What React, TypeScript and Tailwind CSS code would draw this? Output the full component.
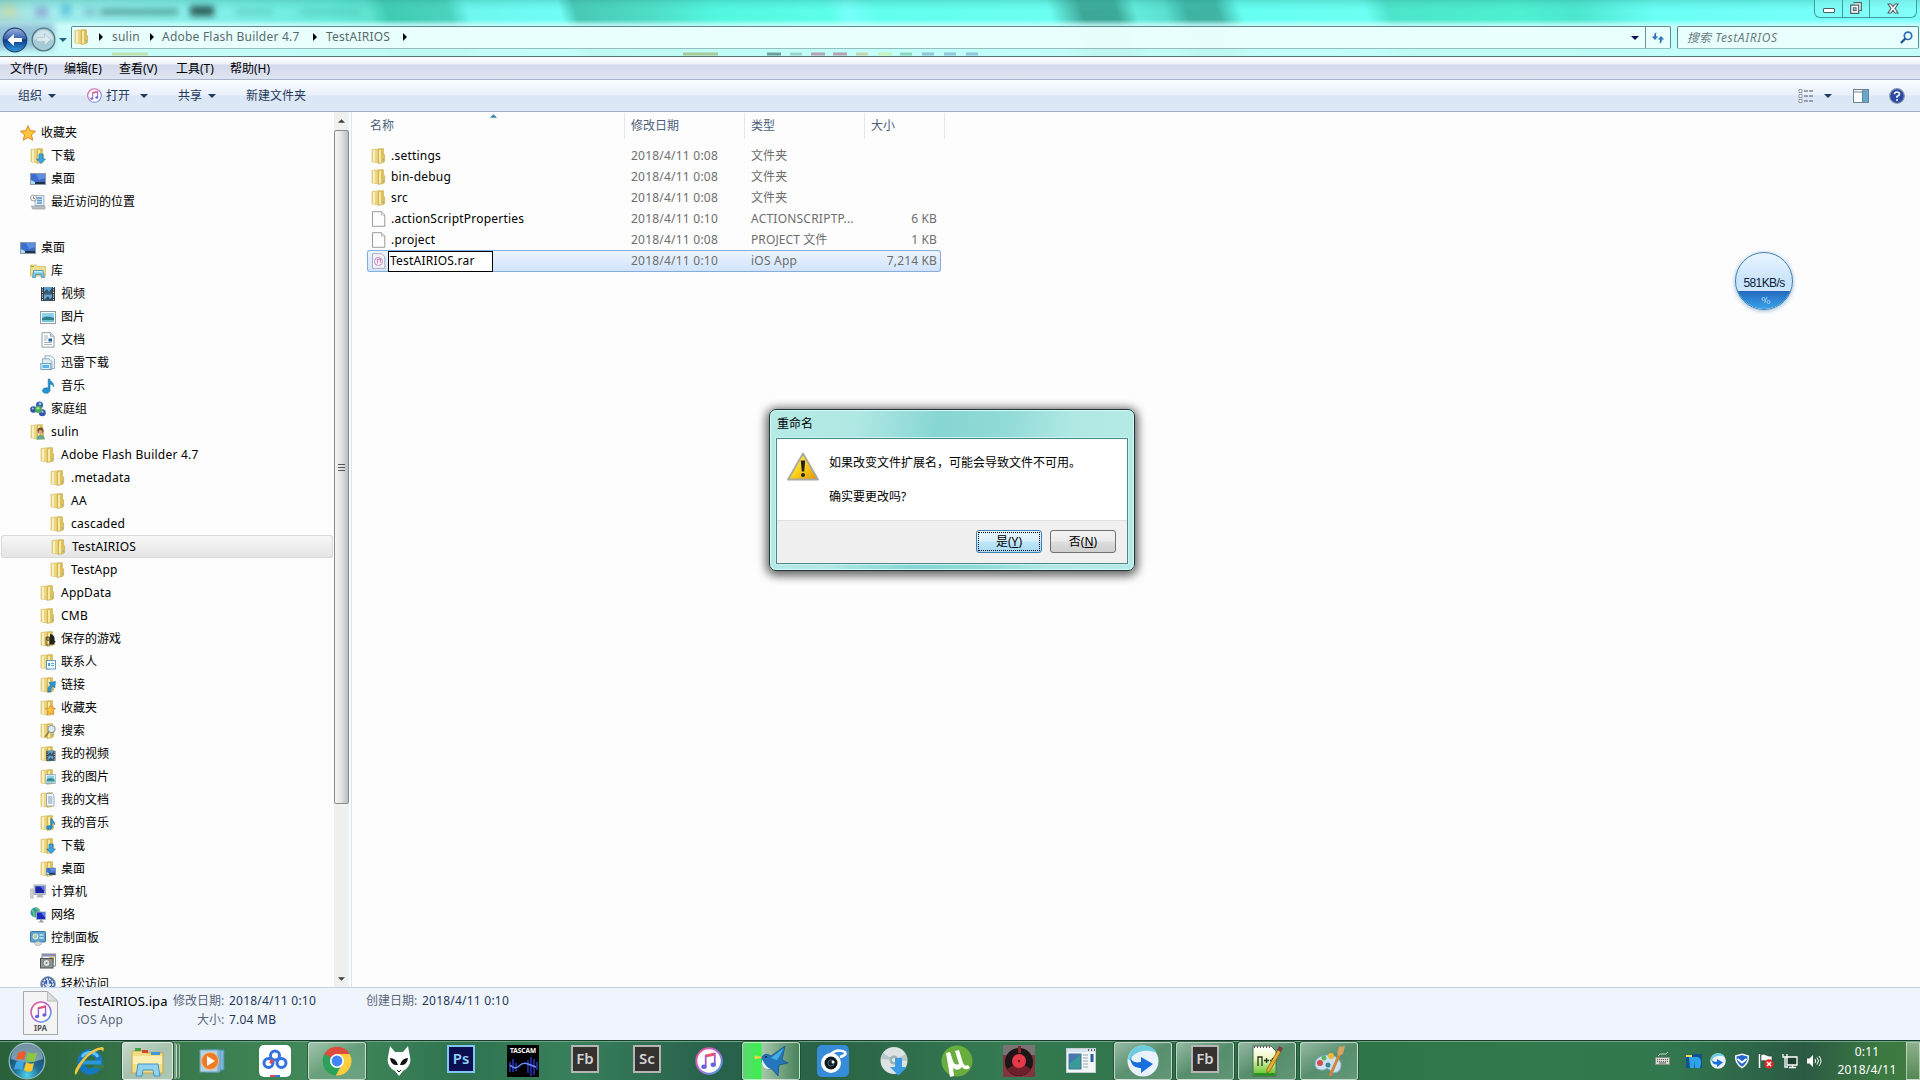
import type { ReactNode } from "react"

type Kind =
  | "star" | "folder" | "desktop" | "recent" | "library" | "video" | "picture" | "doc" | "thunder" | "music"
  | "homegroup" | "user" | "games" | "contacts" | "links" | "favs" | "search" | "fvideo" | "fpicture" | "fdoc"
  | "fmusic" | "download" | "fdesktop" | "computer" | "network" | "control" | "programs" | "ease" | "file" | "ipa"

function FolderBase() {
  return (
    <>
      <path d="M1 1.5 L8 .8 V14.8 L1 14z" fill="#ecd684" stroke="#d4ba60" strokeWidth=".6" />
      <path d="M2 2 H4 V14 H2z" fill="#f8efc0" />
      <path d="M7.2 2.2 L8.4 .7 H12.4 V5.6 L13.6 7 V13.6 L12 14.6 L7.2 15.4z" fill="#dfc15b" stroke="#c4a344" strokeWidth=".6" />
      <path d="M8 2.4 L10 1.4 V14.2 L8 14.8z" fill="#f7e9a6" />
      <path d="M12.5 11v2" stroke="#6fb4c9" strokeWidth=".8" />
    </>
  )
}

function Monitor() {
  return (
    <>
      <rect x=".5" y="2.5" width="15" height="11" fill="#3c69b8" stroke="#8e9aa8" />
      <path d="M1 3h14v5L1 11z" fill="#3d6fd0" />
      <path d="M6 3h9v4L9 9z" fill="#6b9bea" opacity=".7" />
      <rect x="1" y="11" width="14" height="2" fill="#20314c" />
      <path d="M1 13V9l4 2v2z" fill="#a9dcf1" />
    </>
  )
}

const FILM = (
  <>
    <rect x="1" y="1" width="14" height="14" fill="#2b3239" />
    <rect x="4" y="1" width="8" height="6.5" fill="#5b9fd0" />
    <rect x="4" y="8.5" width="8" height="6.5" fill="#69abd7" />
    <path d="M4 6l3-3 2 3 3-4v5H4zM4 14l4-4 2 3 2-2v4H4z" fill="#34546e" />
    <path d="M2.5 1v14M13.5 1v14" stroke="#e6ebee" strokeWidth="1.2" strokeDasharray="1.2 1.2" />
  </>
)

const PICTURE = (
  <>
    <rect x=".5" y="2.5" width="15" height="12" fill="#fff" stroke="#8f9ca8" />
    <rect x="2" y="4" width="12" height="9" fill="#8ed0ec" />
    <path d="M2 9q5-3 12 0v4H2z" fill="#2b8389" />
    <path d="M2 11h12v2H2z" fill="#6fc3cf" />
  </>
)

const STAR = (
  <path d="M8 .7l2.2 5 5.3.5-4 3.6 1.2 5.4L8 12.4l-4.7 2.8 1.2-5.4-4-3.6 5.3-.5z" fill="#ffc53d" stroke="#d97a1d" strokeWidth=".9" />
)

const NOTE = (
  <path d="M8.2 1h1.5c.2 2.600 4.800 3.500 3.800 8-.6-2.200-2-3-3.500-3v6.200c0 4-7.500 4-7.500.6 0-2.700 3.500-3.600 5.700-2.500z" fill="#2593d3" stroke="#156fa8" strokeWidth=".6" />
)

const DOWN = <path d="M9 6h4v5h2.500L11 15.600 6.500 11H9z" fill="#35a5e4" stroke="#1a6ea8" strokeWidth=".6" />

const drawings: Record<Kind, ReactNode> = {
  star: STAR,
  folder: <FolderBase />,
  desktop: <Monitor />,
  recent: (
    <>
      <path d="M5 1.500h9v10H5z" fill="#e3edf3" stroke="#94a3ad" strokeWidth=".8" />
      <path d="M7 4h5M7 6.500h5M7 9h5" stroke="#4f96c8" strokeWidth="1.300" />
      <path d="M1.500 12h13.500v3H2.500z" fill="#b9bfc4" stroke="#90979d" strokeWidth=".6" />
      <circle cx="3.500" cy="4" r="3" fill="#f3f4f5" stroke="#83898d" strokeWidth=".8" />
      <path d="M3.500 2.500v2h1.500" stroke="#555" strokeWidth=".7" fill="none" />
    </>
  ),
  library: (
    <>
      <path d="M.5 2h6l1 1.500h8v9.500H.5z" fill="#f0dd8c" stroke="#cdb55c" strokeWidth=".7" />
      <path d="M1 3h3v1H1z" fill="#74b943" />
      <path d="M2.500 14.500l1-7h9.500l1.500 7h-3.200v-3H5.700v3z" fill="#79c3e1" stroke="#378bb0" strokeWidth=".7" />
      <path d="M4 8h8.500v1.500H3.800z" fill="#c8eefa" />
    </>
  ),
  video: FILM,
  picture: PICTURE,
  doc: (
    <>
      <path d="M2 .7h8.500L14 4.200v11H2z" fill="#fbfcfd" stroke="#8594a3" strokeWidth=".9" />
      <path d="M10.500.7v3.500H14" fill="#dce4ea" stroke="#8594a3" strokeWidth=".8" />
      <path d="M4 4h4M4 6h4M4 8h3M4 10.500h8M4 12.500h8" stroke="#97a4b0" strokeWidth=".8" />
      <rect x="8.500" y="6.500" width="3.500" height="3" fill="#1f5fa0" />
    </>
  ),
  thunder: (
    <>
      <path d="M5 .8h6L14.500 4v9.500H5z" fill="#edf6fb" stroke="#7d9db4" strokeWidth=".8" />
      <path d="M2.500 3.800h6.500L12 6.500v8H2.500z" fill="#dcecf6" stroke="#7d9db4" strokeWidth=".8" />
      <rect x=".8" y="8.500" width="10" height="6" fill="#d8effb" stroke="#6296b8" strokeWidth=".8" />
      <rect x="2.500" y="10" width="6.500" height="3" fill="#58b4e6" />
    </>
  ),
  music: NOTE,
  homegroup: (
    <>
      <circle cx="9.500" cy="4" r="3.600" fill="#3966b0" />
      <circle cx="3.500" cy="8.500" r="3.300" fill="#2f54a8" />
      <circle cx="12.300" cy="11.800" r="3.500" fill="#3456b5" />
      <circle cx="8.500" cy="8.500" r="3.600" fill="#4cae4f" />
      <circle cx="8" cy="7.300" r="1.400" fill="#a4e2a0" />
      <circle cx="10" cy="2.800" r="1.200" fill="#a7c8ef" />
      <circle cx="2.900" cy="7.400" r="1" fill="#a7c8ef" />
      <circle cx="12.500" cy="10.800" r="1.100" fill="#a7c8ef" />
    </>
  ),
  user: (
    <>
      <FolderBase />
      <circle cx="10.500" cy="6.500" r="3" fill="#7a4a33" />
      <circle cx="10.500" cy="8" r="2" fill="#d9a583" />
      <path d="M6.500 15.500q0-4.500 4-4.500t4.500 4.500z" fill="#67a98a" />
    </>
  ),
  games: (
    <>
      <FolderBase />
      <path d="M10 3q4.500.5 4.500 4.500v2l1.300 1.500-1.300.5v2H10z" fill="#25221d" />
      <path d="M6 6h3.500v8H6z" fill="none" stroke="#6a5a2c" />
      <circle cx="8" cy="8" r="1.400" fill="none" stroke="#514520" />
    </>
  ),
  contacts: (
    <>
      <FolderBase />
      <rect x="6.500" y="6.500" width="9" height="8.500" fill="#f1f8fc" stroke="#5c9dc0" />
      <path d="M8 9h2v3H8z" fill="#4aa0d4" />
      <path d="M11 9.500h3M11 11.500h3" stroke="#76a9c6" />
    </>
  ),
  links: (
    <>
      <FolderBase />
      <path d="M8 15q-1-5 2.500-7L9 5.500l6.500-1-.7 6.500-1.800-1.800q-3 2-2 5.800z" fill="#2c96d3" stroke="#1569a0" strokeWidth=".5" />
    </>
  ),
  favs: (
    <>
      <FolderBase />
      <g transform="translate(5.200 4.500) scale(.67)">{STAR}</g>
    </>
  ),
  search: (
    <>
      <FolderBase />
      <circle cx="11.500" cy="6" r="3.500" fill="#dcecf4" stroke="#8f9da6" strokeWidth="1.200" />
      <path d="M9 8.700L5 14" stroke="#9b8651" strokeWidth="1.800" />
    </>
  ),
  fvideo: (
    <>
      <FolderBase />
      <g transform="translate(5.500 4) scale(.66 .72)">{FILM}</g>
    </>
  ),
  fpicture: (
    <>
      <FolderBase />
      <g transform="translate(5.500 3.500) scale(.64 .75)">{PICTURE}</g>
    </>
  ),
  fdoc: (
    <>
      <FolderBase />
      <path d="M6.500 1.500h6L14 3v11H6.500z" fill="#f5f9fb" stroke="#8f9fad" strokeWidth=".8" />
      <path d="M8 5h4.500M8 7h4.500M8 9h4.500M8 11h4.500" stroke="#7d9cb9" />
    </>
  ),
  fmusic: (
    <>
      <FolderBase />
      <g transform="translate(4.500 3) scale(.76)">{NOTE}</g>
    </>
  ),
  download: (
    <>
      <FolderBase />
      {DOWN}
    </>
  ),
  fdesktop: (
    <>
      <FolderBase />
      <g transform="translate(6 5.500) scale(.62)">
        <Monitor />
      </g>
    </>
  ),
  computer: (
    <>
      <path d="M.7 5h2.300v9H.7z" fill="#d7e0d8" stroke="#8c9690" strokeWidth=".6" />
      <rect x="4" y="1" width="11.500" height="9.500" fill="#c9ced8" stroke="#8c94a4" strokeWidth=".7" />
      <rect x="5.300" y="2.300" width="9" height="6.800" fill="#1a22a8" />
      <path d="M10 2.300h4.300v5z" fill="#5a78e0" />
      <path d="M8 10.500h4l1.500 3h-7z" fill="#aeb5bd" />
    </>
  ),
  network: (
    <>
      <circle cx="5.500" cy="5.500" r="5" fill="#2f93b8" />
      <path d="M2 3q3 3 2 7M5 1q5 1 4 5" stroke="#6ac36a" strokeWidth="2" fill="none" />
      <rect x="6.500" y="5" width="9" height="7.500" fill="#1b2bc0" stroke="#a7b3c6" strokeWidth=".9" />
      <path d="M11 5.500h4v5z" fill="#5d84ea" />
      <path d="M10 12.500h2.500v2H14v1H8.500v-1H10z" fill="#99a2ac" />
    </>
  ),
  control: (
    <>
      <rect x=".5" y="1.500" width="15" height="10.500" rx="1" fill="#5ea5d0" stroke="#38749f" />
      <circle cx="5.500" cy="6.500" r="2.500" fill="#a4d19a" stroke="#fff" strokeWidth=".8" />
      <path d="M9.500 5h4M9.500 8h4" stroke="#fff" strokeWidth="1.200" />
      <ellipse cx="8" cy="13.500" rx="3.500" ry="2" fill="#d3dbe0" stroke="#9aa8b1" strokeWidth=".6" />
    </>
  ),
  programs: (
    <>
      <rect x="2" y="1" width="13.500" height="12" fill="#edf0f1" stroke="#878c93" />
      <path d="M2 1h13.500v2.500H2z" fill="#8a8eb4" />
      <path d="M9 4h5v6z" fill="#e8b93d" />
      <rect x=".5" y="5.500" width="12.500" height="9.500" fill="#8e9692" stroke="#4d5352" />
      <circle cx="6.500" cy="10" r="3.500" fill="#dfe4e2" stroke="#747b78" />
      <circle cx="6.500" cy="10" r="1" fill="#747b78" />
    </>
  ),
  ease: (
    <>
      <circle cx="8" cy="8" r="7.300" fill="#3c66b0" stroke="#8793a8" />
      <circle cx="8" cy="8" r="5" fill="none" stroke="#fff" strokeWidth="1.400" strokeDasharray="2 1" />
      <path d="M8 4v4.500h3M5 8l3 3 3-3" stroke="#fff" strokeWidth="1.400" fill="none" />
    </>
  ),
  file: (
    <>
      <path d="M1.500.7h9L13.800 4v11.300H1.500z" fill="#fdfdfd" stroke="#909090" strokeWidth=".9" />
      <path d="M10.500.7V4h3.300" fill="#e6e6e6" stroke="#a0a0a0" strokeWidth=".7" />
    </>
  ),
  ipa: (
    <>
      <path d="M1.500.7h9L13.800 4v11.300H1.500z" fill="#f4f4f8" stroke="#a5a5b0" strokeWidth=".9" />
      <circle cx="7.500" cy="8.500" r="4" fill="#fff" stroke="#a78bcf" />
      <path d="M6.300 10.500V6.500l3-.6v4" stroke="#d65394" strokeWidth=".9" fill="none" />
    </>
  ),
}

function Icon({ kind }: { kind: Kind }) {
  return (
    <svg viewBox="0 0 16 16" className="size-4 shrink-0">
      {drawings[kind]}
    </svg>
  )
}

const pads = ["pl-5", "pl-[30px]", "pl-10", "pl-[50px]"]

const isLatin = (s: string) => /^[\x20-\x7e]+$/.test(s)

const tree: [number, Kind, string][] = [
  [0, "star", "收藏夹"],
  [1, "download", "下载"],
  [1, "desktop", "桌面"],
  [1, "recent", "最近访问的位置"],
  [0, "folder", ""],
  [0, "desktop", "桌面"],
  [1, "library", "库"],
  [2, "video", "视频"],
  [2, "picture", "图片"],
  [2, "doc", "文档"],
  [2, "thunder", "迅雷下载"],
  [2, "music", "音乐"],
  [1, "homegroup", "家庭组"],
  [1, "user", "sulin"],
  [2, "folder", "Adobe Flash Builder 4.7"],
  [3, "folder", ".metadata"],
  [3, "folder", "AA"],
  [3, "folder", "cascaded"],
  [3, "folder", "TestAIRIOS"],
  [3, "folder", "TestApp"],
  [2, "folder", "AppData"],
  [2, "folder", "CMB"],
  [2, "games", "保存的游戏"],
  [2, "contacts", "联系人"],
  [2, "links", "链接"],
  [2, "favs", "收藏夹"],
  [2, "search", "搜索"],
  [2, "fvideo", "我的视频"],
  [2, "fpicture", "我的图片"],
  [2, "fdoc", "我的文档"],
  [2, "fmusic", "我的音乐"],
  [2, "download", "下载"],
  [2, "fdesktop", "桌面"],
  [1, "computer", "计算机"],
  [1, "network", "网络"],
  [1, "control", "控制面板"],
  [2, "programs", "程序"],
  [2, "ease", "轻松访问"],
]

const files: { kind: Kind; name: string; date: string; type: string; size: string }[] = [
  { kind: "folder", name: ".settings", date: "2018/4/11 0:08", type: "文件夹", size: "" },
  { kind: "folder", name: "bin-debug", date: "2018/4/11 0:08", type: "文件夹", size: "" },
  { kind: "folder", name: "src", date: "2018/4/11 0:08", type: "文件夹", size: "" },
  { kind: "file", name: ".actionScriptProperties", date: "2018/4/11 0:10", type: "ACTIONSCRIPTP...", size: "6 KB" },
  { kind: "file", name: ".project", date: "2018/4/11 0:08", type: "PROJECT 文件", size: "1 KB" },
  { kind: "ipa", name: "TestAIRIOS.rar", date: "2018/4/11 0:10", type: "iOS App", size: "7,214 KB" },
]

function Caret({ className = "" }: { className?: string }) {
  return (
    <svg viewBox="0 0 8 4" className={`h-1 w-2 shrink-0 ${className}`}>
      <path d="M0 0h8L4 4z" fill="currentColor" />
    </svg>
  )
}

function CrumbArrow() {
  return (
    <svg viewBox="0 0 4 8" className="h-2 w-1 shrink-0">
      <path d="M0 0l4 4-4 4z" fill="#000" />
    </svg>
  )
}

function ITunes({ className }: { className: string }) {
  return (
    <svg viewBox="0 0 28 28" className={className}>
      <defs>
        <linearGradient id="tunes" x1="0" y1="0" x2="1" y2="1">
          <stop offset="0" stopColor="#f0528c" />
          <stop offset=".5" stopColor="#b06bd8" />
          <stop offset="1" stopColor="#3fa7ea" />
        </linearGradient>
      </defs>
      <circle cx="14" cy="14" r="12.700" fill="#fff" stroke="url(#tunes)" strokeWidth="2" />
      <path d="M10.500 7.500L20 5.500v3l-9.500 2z" fill="#f0506f" />
      <path d="M10.700 8v11.500M19.800 6v11.500" stroke="#a35ccf" strokeWidth="1.800" />
      <ellipse cx="9" cy="19.700" rx="2.700" ry="2.200" fill="#6a62e0" />
      <ellipse cx="18.300" cy="17.700" rx="2.700" ry="2.200" fill="#6a62e0" />
    </svg>
  )
}

function TitleBar() {
  return (
    <header className="relative h-[57px] shrink-0 overflow-hidden border-b border-[#5b7078] bg-[#66fff0]">
      {/* wallpaper seen through the glass */}
      <svg viewBox="0 0 1920 57" preserveAspectRatio="none" className="absolute inset-0 h-full w-full">
        <defs>
          <filter id="blot" x="-20%" y="-80%" width="140%" height="260%">
            <feGaussianBlur stdDeviation="3" />
          </filter>
          <linearGradient id="aero" gradientUnits="userSpaceOnUse" x1="0" y1="0" x2="1745" y2="-550">
            <stop offset="0" stopColor="#a6ddd8" />
            <stop offset=".02" stopColor="#a4ecec" />
            <stop offset=".11" stopColor="#83efe8" />
            <stop offset=".17" stopColor="#66ecdc" />
            <stop offset=".19" stopColor="#5fe3d0" />
            <stop offset=".2" stopColor="#3fcbb3" />
            <stop offset=".232" stopColor="#4bd3bf" />
            <stop offset=".242" stopColor="#6df7ee" />
            <stop offset=".29" stopColor="#70fdf6" />
            <stop offset=".298" stopColor="#48c8b6" />
            <stop offset=".34" stopColor="#4fdfc8" />
            <stop offset=".37" stopColor="#52f7df" />
            <stop offset=".43" stopColor="#5cffe9" />
            <stop offset=".44" stopColor="#78fffb" />
            <stop offset=".455" stopColor="#62ffee" />
            <stop offset=".545" stopColor="#6bfff1" />
            <stop offset=".562" stopColor="#3ea898" />
            <stop offset=".58" stopColor="#3ca999" />
            <stop offset=".59" stopColor="#64eadb" />
            <stop offset=".605" stopColor="#5be0d0" />
            <stop offset=".617" stopColor="#3eb3a3" />
            <stop offset=".633" stopColor="#40b5a6" />
            <stop offset=".645" stopColor="#66fff2" />
            <stop offset=".71" stopColor="#6cfff2" />
            <stop offset=".722" stopColor="#4ce5cb" />
            <stop offset=".79" stopColor="#4df0d2" />
            <stop offset=".82" stopColor="#4de6cf" />
            <stop offset=".86" stopColor="#6afff6" />
            <stop offset="1" stopColor="#7dfffb" />
          </linearGradient>
          <linearGradient id="frost" x1="0" x2="0" y1="0" y2="1">
            <stop offset="0" stopColor="#2c9d90" stopOpacity=".3" />
            <stop offset=".2" stopColor="#4fd5c8" stopOpacity="0" />
            <stop offset=".35" stopColor="#d2fffc" stopOpacity="0" />
            <stop offset=".46" stopColor="#d2fffc" stopOpacity=".85" />
            <stop offset="1" stopColor="#cdfffb" stopOpacity=".9" />
          </linearGradient>
        </defs>
        <rect width="1920" height="57" fill="url(#aero)" />
        <g filter="url(#blot)">
          <rect x="2" y="4" width="14" height="14" fill="#c9d9a8" opacity=".7" />
          <rect x="35" y="6" width="13" height="12" fill="#8a9ed2" opacity=".7" />
          <rect x="61" y="4" width="10" height="12" fill="#48b9dc" opacity=".7" />
          <path d="M84 12h12" stroke="#74a9c4" strokeWidth="8" opacity=".6" />
          <path d="M100 12h78" stroke="#38807c" strokeWidth="6" opacity=".7" />
          <path d="M190 11h24" stroke="#163f3d" strokeWidth="11" opacity=".8" />
          <path d="M235 12h38M300 12h60" stroke="#4eb9ab" strokeWidth="6" opacity=".5" />
        </g>
        <rect width="1920" height="57" fill="url(#frost)" />
        <rect x="-10" y="24" width="64" height="26" fill="#5a86b8" opacity=".5" filter="url(#blot)" />
        <g strokeWidth="3" opacity=".5">
          <path d="M112 55h36" stroke="#b5c86a" />
          <path d="M683 55h35" stroke="#8d9440" />
          <path d="M767 55h14" stroke="#1c403e" />
          <path d="M790 55h12" stroke="#7ba8a4" />
          <path d="M811 55h14M833 55h14" stroke="#a84a6e" />
          <path d="M856 55h12" stroke="#c9a95c" />
          <path d="M878 55h14" stroke="#cfe37a" />
          <path d="M900 55h12" stroke="#5cb08c" />
          <path d="M922 55h12M944 55h12M966 55h12" stroke="#5a90c2" />
        </g>
      </svg>

      <div className="absolute top-0 right-[3px] flex h-[18px] w-[103px] overflow-hidden rounded-b-md border border-t-0 border-[#409f9c] bg-[#8cfff9]/40">
        <div className="flex w-7 items-center justify-center border-r border-[#409f9c]">
          <span className="mt-1 h-[5px] w-3 rounded-[1px] border border-[#4c5e66] bg-white" />
        </div>
        <div className="flex w-[27px] items-center justify-center border-r border-[#409f9c]">
          <svg viewBox="0 0 12 12" className="mb-px size-3">
            <path d="M3.500 .7h7.800v7.800H9.500M.7 3.200h8v8.100h-8z" fill="#fff" stroke="#4c5e66" strokeWidth="1.200" />
            <rect x="3.300" y="5.800" width="2.800" height="2.800" fill="#9dd" stroke="#4c5e66" />
          </svg>
        </div>
        <div className="flex flex-1 items-center justify-center">
          <svg viewBox="0 0 12 11" className="mb-px h-[11px] w-3">
            <path d="M1 1h3l2 2.500L8 1h3L8 5.500 11 10H8L6 7.500 4 10H1l3-4.500z" fill="#fff" stroke="#4c5e66" strokeWidth="1.100" />
          </svg>
        </div>
      </div>

      <div className="relative mt-[26px] flex h-[23px] items-center pr-px">
        <div className="flex w-[71px] shrink-0 items-center pt-1 pl-0.5">
          <svg viewBox="0 0 26 26" className="size-[26px] shrink-0">
            <defs>
              <linearGradient id="back" x1="0" y1="0" x2="0" y2="1">
                <stop offset="0" stopColor="#9bb3e0" />
                <stop offset=".45" stopColor="#3560ad" />
                <stop offset=".5" stopColor="#0f3a8c" />
                <stop offset="1" stopColor="#2d9fe0" />
              </linearGradient>
            </defs>
            <circle cx="13" cy="13" r="11.800" fill="url(#back)" stroke="#25426f" strokeWidth="1.200" />
            <path d="M5.500 13l6.500-6v4h8v4h-8v4z" fill="#fff" />
          </svg>
          <svg viewBox="0 0 26 26" className="ml-[3px] size-[25px] shrink-0">
            <circle cx="13" cy="13" r="11.800" fill="#a6cad6" stroke="#54757f" strokeWidth="1.300" />
            <path d="M3 13a10 10 0 0 1 20 0z" fill="#cfe3ea" />
            <path d="M20.500 13L14 7v4H6v4h8v4z" fill="#dbecf1" stroke="#9bb9c5" strokeWidth=".6" />
          </svg>
          <Caret className="ml-[3px] text-[#1d6586]" />
        </div>
        <div className="flex h-[23px] w-[1600px] shrink-0 items-center rounded-xs border border-[#5d8b8d] border-b-[#94bdbb] bg-[#ecfffe]/90 text-[#5a6a6c]">
          <div className="flex flex-1 items-center pb-px pl-[2px] tracking-[.22px]">
            <Icon kind="folder" />
            <div className="flex items-center pl-[9px]">
              <CrumbArrow />
              <span className="w-[47px] pl-[9px]">sulin</span>
              <CrumbArrow />
              <span className="w-[159px] pl-[8px]">Adobe Flash Builder 4.7</span>
              <CrumbArrow />
              <span className="w-[86px] pl-[9px]">TestAIRIOS</span>
              <CrumbArrow />
            </div>
          </div>
          <Caret className="mr-[6px] text-[#001050]" />
          <div className="flex h-full w-[25px] items-center justify-center border-l border-[#6b9496]">
            <svg viewBox="0 0 14 12" className="h-3 w-3.5">
              <path d="M5.500.5C3 1 3.200 3 3.200 4.500H.8L4 8l3.200-3.500H5.200C5 3 5 1.500 5.500.5zM8.500 11.500c2.500-.5 2.300-2.500 2.300-4h2.400L10 4 6.800 7.500h2c.2 1.500.2 3-.3 4z" fill="#2f73b8" />
            </svg>
          </div>
        </div>
        <div className="ml-1.5 flex h-[23px] flex-1 items-center justify-between rounded-xs border border-[#5d8b8d] border-b-[#94bdbb] bg-[#ecfffe]/90 pr-[5px] pl-[9px] text-[#6a7c7d] italic">
          <span>
            搜索 <span className="ml-px tracking-[.6px]">TestAIRIOS</span>
          </span>
          <svg viewBox="0 0 13 13" className="size-[13px]">
            <circle cx="8" cy="4.800" r="3.700" fill="none" stroke="#2d6db5" strokeWidth="1.700" />
            <path d="M5.300 7.600L1 12" stroke="#1d4f90" strokeWidth="2.200" />
          </svg>
        </div>
      </div>
    </header>
  )
}

function MenuBar() {
  return (
    <nav className="flex h-[23px] shrink-0 items-center border-b border-[#a9b4c8] bg-[linear-gradient(180deg,#fff_0,#eef1f8_7px,#d4daeb_8px,#dfe4f2_100%)] pt-0.5 pl-2.5">
      <span className="w-[54px]">文件(F)</span>
      <span className="w-[55px]">编辑(E)</span>
      <span className="w-[57px]">查看(V)</span>
      <span className="w-[54px]">工具(T)</span>
      <span>帮助(H)</span>
    </nav>
  )
}

function Toolbar() {
  return (
    <div className="flex h-8 shrink-0 items-center border-b border-[#a0afc3] bg-[linear-gradient(180deg,#fbfdff_0,#e9effb_15px,#dce6f4_16px,#dde9f7_100%)] pr-[15px] pl-[18px] text-[#1e395b]">
      <span className="flex w-[69px] items-center gap-1.5">
        组织 <Caret />
      </span>
      <span className="flex w-[91px] items-center">
        <ITunes className="mr-1 size-[15px]" />
        打开 <Caret className="ml-2.5" />
      </span>
      <span className="flex w-[68px] items-center gap-1.5">
        共享 <Caret />
      </span>
      <span>新建文件夹</span>
      <div className="ml-auto flex items-center">
        <svg viewBox="0 0 16 14" className="h-3.5 w-4">
          <path d="M1 .5h3v3H1zM1 5.500h3v3H1zM1 10.500h3v3H1z" fill="#fff" stroke="#777f88" strokeWidth=".8" />
          <path d="M6 2h9.500M6 7h9.500M6 12h9.500" stroke="#4a5563" strokeDasharray="4 1" />
        </svg>
        <Caret className="ml-2.5" />
        <svg viewBox="0 0 16 14" className="ml-[21px] h-3.5 w-4">
          <rect x=".5" y=".5" width="15" height="13" fill="#fff" stroke="#6f8393" />
          <rect x="10" y="1" width="5" height="12" fill="#63a9cf" />
          <path d="M1 3h9M9.500 1v12" stroke="#6f8393" />
        </svg>
        <svg viewBox="0 0 16 16" className="ml-5 size-4">
          <circle cx="8" cy="8" r="7.300" fill="#2a4aa5" stroke="#8793ae" strokeWidth="1.200" />
          <path d="M5.500 6.200Q5.500 4 8 4t2.500 2.100Q10.500 7.400 8 8.500v1.300" fill="none" stroke="#fff" strokeWidth="1.700" />
          <circle cx="8" cy="12" r="1" fill="#fff" />
        </svg>
      </div>
    </div>
  )
}

function NavTree() {
  return (
    <aside className="w-[334px] shrink-0 overflow-hidden pt-[9px]">
      {tree.map(([level, kind, label], i) => (
        <div
          key={i}
          className={`flex h-[23px] items-center gap-[5px] ${pads[level]} ${
            label === "TestAIRIOS"
              ? "mr-px ml-px rounded-[3px] bg-linear-to-b from-[#f8f8f8] to-[#e4e4e4] shadow-[inset_0_0_0_1px_#d9d9d9]"
              : ""
          }`}
        >
          {label && (
            <>
              <Icon kind={kind} />
              <span className={isLatin(label) ? "tracking-[.22px]" : ""}>{label}</span>
            </>
          )}
        </div>
      ))}
    </aside>
  )
}

function ScrollBar() {
  return (
    <div className="flex w-[15px] shrink-0 flex-col items-center bg-[#f0f0f0]">
      <svg viewBox="0 0 8 4" className="mt-[7px] mb-[7px] h-1 w-[7px]">
        <path d="M0 4h8L4 0z" fill="#404040" />
      </svg>
      <div className="flex h-[674px] w-[15px] flex-col items-center justify-center gap-0.5 rounded-xs border border-[#8b8b8b] bg-linear-to-r from-[#f5f5f5] via-[#e2e2e4] to-[#bcbcc0]">
        <span className="h-px w-[7px] bg-[#555]" />
        <span className="h-px w-[7px] bg-[#555]" />
        <span className="h-px w-[7px] bg-[#555]" />
      </div>
      <Caret className="mt-auto mb-[6px] w-[7px] text-[#404040]" />
    </div>
  )
}

function FileList() {
  return (
    <main className="ml-0.5 flex-1 border-l border-[#d6e5f5] pl-[15px]">
      <div className="flex h-[27px] items-center pt-px text-[#4c607a]">
        <div className="relative flex h-full w-[258px] items-center border-r border-[#e3e8ee] pl-[3px]">
          名称
          <svg viewBox="0 0 8 4" className="absolute top-px left-[123px] h-1 w-[7px]">
            <path d="M0 4h8L4 0z" fill="#3c7fa8" />
          </svg>
        </div>
        <div className="flex h-full w-[120px] items-center border-r border-[#e3e8ee] pl-1.5">修改日期</div>
        <div className="flex h-full w-[120px] items-center border-r border-[#e3e8ee] pl-1.5">类型</div>
        <div className="flex h-full w-20 items-center border-r border-[#e3e8ee] pl-1.5">大小</div>
      </div>
      <div className="w-[574px] pt-1.5">
        {files.map((f) => {
          const editing = f.kind === "ipa"
          return (
            <div
              key={f.name}
              className={`flex items-center text-[#6d6d6d] ${
                editing
                  ? "h-[22px] rounded-[3px] bg-linear-to-b from-[#eef5fe] to-[#cfe3fc] shadow-[inset_0_0_0_1px_#84acdd]"
                  : "h-[21px]"
              }`}
            >
              <div className="flex w-[264px] items-center pl-1 tracking-[.22px] text-black">
                <Icon kind={f.kind} />
                {editing ? (
                  <span className="ml-px flex h-[21px] w-[105px] items-center border border-black bg-white pl-px">{f.name}</span>
                ) : (
                  <span className="pl-1">{f.name}</span>
                )}
              </div>
              <span className="w-[120px] tracking-[.22px]">{f.date}</span>
              <span className={`w-[110px] ${isLatin(f.type) ? "tracking-[.22px]" : "tracking-[.1px]"}`}>{f.type}</span>
              <span className="w-[76px] text-right tracking-[.15px]">{f.size}</span>
            </div>
          )
        })}
      </div>
    </main>
  )
}

function DetailsPane() {
  return (
    <section className="flex h-[53px] shrink-0 border-t border-[#c3d3e6] bg-[#f0f5fd] text-[#1e395b]">
      <div className="relative mt-[3px] ml-[23px] h-[44px] w-[35px]">
        <svg viewBox="0 0 35 44" className="absolute h-11 w-[35px]">
          <path d="M.5.500h24L34.500 10v33.500H.5z" fill="#f4f4f4" stroke="#aaa" />
          <path d="M24.500.5V10h10z" fill="#ddd" stroke="#bbb" />
        </svg>
        <div className="relative flex flex-col items-center">
          <ITunes className="mt-2.5 size-[22px]" />
          <span className="text-[8px] leading-[10px] font-bold text-[#555]">IPA</span>
        </div>
      </div>
      <div className="flex flex-col pt-[3px] pl-[19px]">
        <div className="flex h-5 items-center">
          <span className="w-[96px] text-[13px] tracking-[.1px] text-black">TestAIRIOS.ipa</span>
          <span className="w-[56px] text-[#5a6779]">修改日期:</span>
          <span className="w-[137px] tracking-[.22px]">2018/4/11 0:10</span>
          <span className="w-[56px] text-[#5a6779]">创建日期:</span>
          <span className="tracking-[.22px]">2018/4/11 0:10</span>
        </div>
        <div className="flex h-[18px] items-center">
          <span className="w-[120px] tracking-[.22px] text-[#5a6779]">iOS App</span>
          <span className="w-8 text-[#5a6779]">大小:</span>
          <span className="tracking-[.22px]">7.04 MB</span>
        </div>
      </div>
    </section>
  )
}

function AdobeTile({ text, blue }: { text: string; blue?: boolean }) {
  return (
    <span
      className={`mb-1 grid size-7 place-items-center border-2 text-[15px] leading-none font-semibold ${
        blue ? "border-[#7fc4f4] bg-[#0c0f4f] text-[#8fd0fa]" : "border-[#b5b5b5] bg-[#35322f] text-[#d3d3d3]"
      }`}
    >
      {text}
    </span>
  )
}

function SwirlIcon({ className }: { className: string }) {
  return (
    <svg viewBox="0 0 32 32" className={className}>
      <circle cx="16" cy="16" r="15.500" fill="#e9f2fa" />
      <path d="M1 14Q3 1 17 .6q9 .4 12.500 7Q20 4 12 7q-8 3-8 9z" fill="#6fcbe0" />
      <path d="M3 12q2 7 11 5l0-5 12 7-12 9v-5Q4 24 3 12z" fill="#176fdc" />
    </svg>
  )
}

const apps: { on?: boolean; extra?: string; icon: ReactNode }[] = [
  {
    icon: (
      <svg viewBox="0 0 32 32" className="size-8">
        <circle cx="17" cy="17" r="9.500" fill="none" stroke="#1577c0" strokeWidth="6.500" />
        <path d="M9 12a9.500 9.500 0 0 1 16 0" fill="none" stroke="#63c5f2" strokeWidth="3" />
        <path d="M10 15.500h18v4H10z" fill="#2a97da" />
        <path d="M21 20h10v3.500H21z" fill="#3a7b4e" />
        <path d="M3 30q-4-3 5-14Q18 3 29 2q3 0 1 5 0-3-4-2Q14 9 6 24q-2 4-3 6z" fill="#f3c63f" />
      </svg>
    ),
  },
  {
    on: true,
    icon: (
      <svg viewBox="0 0 34 32" className="h-8 w-[34px]">
        <path d="M1 6h12l2 2h17v20H1z" fill="#f2dc84" stroke="#c7a94f" />
        <path d="M4 3h6v3H4z" fill="#43a047" />
        <path d="M11 5h6v3h-6z" fill="#d9472b" />
        <path d="M20 7h9v3h-9z" fill="#4797cf" />
        <path d="M2 11h29v8H2z" fill="#fbeeb1" />
        <path d="M5 31l2-12h20l2 12h-6l-1-6H12l-1 6z" fill="#8fd1ee" stroke="#4697bd" />
      </svg>
    ),
  },
  {
    icon: (
      <svg viewBox="0 0 28 26" className="h-[26px] w-7">
        <path d="M10 2h15v20H10z" fill="#7cb7d7" stroke="#4d8cae" />
        <path d="M7 2h14v22H7z" fill="#9fcbe2" stroke="#5d9abb" />
        <rect x="1" y="2" width="18" height="22" fill="#b3d4e6" stroke="#6d9fba" />
        <circle cx="11" cy="13" r="8.500" fill="#ef7a22" stroke="#f7b47c" />
        <path d="M8 8l8 5-8 5z" fill="#fff" />
      </svg>
    ),
  },
  {
    icon: (
      <svg viewBox="0 0 32 32" className="size-8">
        <rect width="32" height="32" rx="5" fill="#fff" />
        <circle cx="16" cy="10.500" r="4.500" fill="none" stroke="#3374e0" strokeWidth="3" />
        <circle cx="9.500" cy="18" r="4.500" fill="none" stroke="#3374e0" strokeWidth="3" />
        <circle cx="22.500" cy="18" r="4.500" fill="none" stroke="#3374e0" strokeWidth="3" />
        <path d="M13.500 14.500l-2 4" stroke="#e14b4b" strokeWidth="3" />
        <path d="M11 31h5" stroke="#e14b4b" strokeWidth="2" />
        <path d="M16 31h5" stroke="#3374e0" strokeWidth="2" />
      </svg>
    ),
  },
  {
    on: true,
    icon: (
      <svg viewBox="0 0 30 30" className="size-[30px]">
        <path d="M15 15L2.400 8A14.500 14.500 0 0 1 27.600 8z" fill="#dd4b3c" />
        <path d="M15 15L2.400 8A14.500 14.500 0 0 0 14 29.500l6-12z" fill="#2ba15a" />
        <path d="M15 15l5 3-6 11.500A14.500 14.500 0 0 0 27.600 8H15z" fill="#fccd3e" />
        <circle cx="15" cy="15" r="7" fill="#fff" />
        <circle cx="15" cy="15" r="5.400" fill="#4285f4" />
      </svg>
    ),
  },
  {
    icon: (
      <svg viewBox="0 0 24 30" className="h-[30px] w-6">
        <path d="M3 0l5 6h8l5-6 2 11q2 9-7 14l-4 5-4-5Q-1 20 1 11z" fill="#fff" />
        <path d="M3 12q6 0 8 7-7 1-8-7zM21 12q-6 0-8 7 7 1 8-7z" fill="#111" />
        <path d="M10 24l2 2 2-2" stroke="#111" fill="none" />
      </svg>
    ),
  },
  { icon: <AdobeTile text="Ps" blue /> },
  {
    icon: (
      <span className="relative flex size-8 justify-center bg-black">
        <span className="text-[6.5px] leading-[12px] font-bold text-white">TASCAM</span>
        <svg viewBox="0 0 32 32" className="absolute inset-0">
          <path d="M3 17v10M6 14v13M9 18v8M21 15v13M24 12v19M27 14v16M30 17v8" stroke="#2632b8" strokeWidth="2" opacity=".8" />
          <path d="M3 20q5 5 9 1t9-2 8 3" fill="none" stroke="#6f8cff" strokeWidth="1.500" />
        </svg>
      </span>
    ),
  },
  { icon: <AdobeTile text="Fb" /> },
  { icon: <AdobeTile text="Sc" /> },
  { icon: <ITunes className="size-7" /> },
  {
    on: true,
    extra: "bg-[linear-gradient(90deg,#5cd673_0,#38f24a_18px,#a5c8ab_19px,#47825c_100%)]",
    icon: (
      <svg viewBox="0 0 34 30" className="h-[30px] w-[34px]">
        <path d="M1 10l8 1.500-8 1z" fill="#f1d44a" stroke="#f1d44a" />
        <path d="M8 11q3-5 9-1L31 0l-3 14 6 3-9 2-1 11-6-7q-7 1-10-7z" fill="#2477bd" stroke="#134b84" strokeWidth=".7" />
        <path d="M8 13q4 9 9 10-8 1-9-6z" fill="#e6f3fb" />
        <path d="M17 12L30 2l-7 12z" fill="#45b0e3" />
        <circle cx="12" cy="11" r=".9" fill="#012" />
      </svg>
    ),
  },
  {
    icon: (
      <svg viewBox="0 0 32 32" className="size-8">
        <rect width="32" height="32" rx="5" fill="#368cd8" />
        <path d="M14 9q6-6 14-2 2 3-5 5" fill="none" stroke="#fff" strokeWidth="2.500" />
        <circle cx="14" cy="18" r="10" fill="#fff" />
        <circle cx="14" cy="18" r="6.500" fill="#101820" />
        <circle cx="14" cy="18" r="3" fill="none" stroke="#4c6774" />
        <circle cx="16" cy="17" r="1.500" fill="#fff" />
      </svg>
    ),
  },
  {
    icon: (
      <svg viewBox="0 0 30 30" className="size-[30px]">
        <circle cx="14" cy="14.500" r="13.500" fill="#dde2e3" />
        <path d="M14 14L3 7l-2 6zM14 14l12-6 1 7z" fill="#b7c7c9" />
        <circle cx="14" cy="14" r="4.500" fill="#9fb0b2" />
        <circle cx="14" cy="14" r="2" fill="#e6eded" />
        <path d="M15 12h7v9h5l-8.500 8.500L10 21h5z" fill="#3b9be4" />
      </svg>
    ),
  },
  {
    icon: (
      <svg viewBox="0 0 32 32" className="size-8">
        <circle cx="16" cy="16" r="15.500" fill="#69ad3e" />
        <path d="M5 8l4-1 3 9q2 5 6 3l-4-13 4-1 4 13q2 4 5 2l2 3q-5 3-8-1-4 5-9 1l1 8-4 1z" fill="#fff" />
      </svg>
    ),
  },
  {
    icon: (
      <svg viewBox="0 0 32 32" className="size-8">
        <rect width="32" height="32" fill="#83343d" />
        <path d="M0 0h32v10H0z" fill="#7b7373" />
        <circle cx="16" cy="17" r="14" fill="#1d1517" />
        <path d="M4 24a14 14 0 0 0 24 0l-12-7z" fill="#6d1f2a" />
        <circle cx="16" cy="16" r="7" fill="#e53a47" />
        <circle cx="16" cy="16" r="1.200" fill="#7c1420" />
        <path d="M15 1h3v7h-3z" fill="#8a2632" />
      </svg>
    ),
  },
  {
    icon: (
      <svg viewBox="0 0 30 25" className="h-[25px] w-[30px]">
        <rect x=".5" y=".5" width="29" height="24" fill="#f3f6f8" stroke="#c5ccd0" />
        <path d="M1 1h28v3H1z" fill="#d5e3ee" />
        <path d="M22 2h1M25 2h1M28 2h1" stroke="#333" strokeWidth="1.500" />
        <rect x="3" y="6" width="12" height="15" fill="#3a9b96" stroke="#41719a" />
        <path d="M3 6h12l-12 10z" fill="#4878b2" />
        <path d="M17 7h5M17 10h5M17 13h5M17 16h5M17 19h5" stroke="#9aa5ac" />
        <path d="M26 6v8" stroke="#2b5c9d" strokeWidth="3" />
      </svg>
    ),
  },
  { on: true, icon: <SwirlIcon className="size-8" /> },
  { on: true, icon: <AdobeTile text="Fb" /> },
  {
    on: true,
    icon: (
      <svg viewBox="0 0 32 32" className="size-8">
        <defs>
          <linearGradient id="npp" x1="0" x2="0" y1="0" y2="1">
            <stop offset="0" stopColor="#fff" />
            <stop offset=".4" stopColor="#eef8c4" />
            <stop offset="1" stopColor="#56c21a" />
          </linearGradient>
        </defs>
        <path d="M2 1h18l5 5v25H2z" fill="url(#npp)" stroke="#596357" />
        <path d="M3 2h17" stroke="#555" strokeWidth="2" strokeDasharray="1 2" />
        <path d="M3 28h21v3H3z" fill="#2d9226" />
        <path d="M7 21v-9h4v9M13 15.500h5M15.500 13v5M19 15.500h5M21.500 13v5" stroke="#26331f" strokeWidth="1.300" fill="none" />
        <path d="M28 3l3 1.500L19 26l-3 2v-4z" fill="#e8ab2c" stroke="#83601a" strokeWidth=".7" />
        <path d="M28 1l4 2-2 4-4-2z" fill="#774340" />
      </svg>
    ),
  },
  {
    on: true,
    icon: (
      <svg viewBox="0 0 32 32" className="size-8">
        <path d="M2 20Q1 12 13 10q11-1 15 8 1 9-7 10-3 0-4-3-3-3-6 0-8 1-9-5z" fill="#c9e2f3" stroke="#7ea9c7" />
        <circle cx="7" cy="18" r="3" fill="#d8484c" />
        <circle cx="11" cy="13" r="2.500" fill="#63b45d" />
        <circle cx="18" cy="11" r="3" fill="#f0b83b" />
        <circle cx="15" cy="20" r="2.500" fill="#3a8496" />
        <path d="M27 8L17 31" stroke="#d1853c" strokeWidth="3" />
        <path d="M24 8l2-6 6-1-2 8-4 2z" fill="#d8a264" />
      </svg>
    ),
  },
]

function Taskbar() {
  return (
    <footer className="flex h-10 shrink-0 border-t border-[#173d2b] bg-[linear-gradient(90deg,#2b613a_0,#3a7b4e_10%,#438a5b_17%,#2f7350_24%,#38805b_30%,#28614c_37%,#2b6547_44%,#357a52_52%,#2c7247_64%,#32794e_80%,#31784f_87%,#2b5a43_94%,#3c7a42_98%,#417c3f_100%)] shadow-[inset_0_1px_0_#73a387]">
      <svg viewBox="0 0 38 38" className="mt-px ml-2 size-[38px] shrink-0">
        <defs>
          <radialGradient id="orb" cx=".5" cy=".9" r=".9">
            <stop offset="0" stopColor="#4fd2ea" />
            <stop offset=".4" stopColor="#1f6b93" />
            <stop offset="1" stopColor="#183f5a" />
          </radialGradient>
        </defs>
        <circle cx="19" cy="19" r="17.800" fill="url(#orb)" stroke="#8cb7bd" strokeWidth="1.300" />
        <path d="M3 17A16 16 0 0 1 35 17Q19 24 3 17z" fill="#cfe1e4" opacity=".5" />
        <path d="M10 11q5-3 8-1l-2 8q-4-2-8 0z" fill="#ef5a26" />
        <path d="M20 10q4 3 9 0l-2 9q-5 2-9-1z" fill="#8cc63e" />
        <path d="M8 20q4-2 8 0l-2 8q-4-2-8 0z" fill="#3fa4e4" />
        <path d="M18 20q4 3 8 1l-2 8q-5 2-8-1z" fill="#fdc72e" />
      </svg>
      <div className="ml-3.5 flex gap-1">
        {apps.map((app, i) => (
          <div key={i} className="flex w-[58px] items-center">
            <div
              className={`flex h-[38px] items-center justify-center ${i === 1 ? "w-[51px] bg-white/45!" : "w-[58px]"} ${
                app.on ? "rounded-[3px] border border-white/60 shadow-[0_0_0_1px_#1a3d2a99]" : ""
              } ${app.on ? app.extra ?? "bg-linear-to-br from-white/50 via-white/20 to-white/25" : ""}`}
            >
              {app.icon}
            </div>
            {i === 1 && (
              <>
                <span className="ml-px h-9 w-[3px] rounded-r-sm border-r border-white/60 bg-white/30" />
                <span className="h-9 w-[3px] rounded-r-sm border-r border-white/50 bg-white/10" />
              </>
            )}
          </div>
        ))}
      </div>
      <div className="ml-auto flex items-center">
        <svg viewBox="0 0 15 14" className="mb-1.5 h-3.5 w-[15px]">
          <rect x=".5" y="6.500" width="14" height="7" fill="#dcdcd6" stroke="#8b8f86" />
          <path d="M2 8.500h11M2 10.500h11" stroke="#555" strokeDasharray="1 1" />
          <path d="M4 12h7" stroke="#555" />
          <path d="M3 5q2-3 5-2t5-2" stroke="#cfd3cb" fill="none" />
        </svg>
        <div className="ml-4 flex items-center gap-2">
          <svg viewBox="0 0 16 16" className="size-4">
            <path d="M0 3h5v12H0zM6 1h10v14H6z" fill="#13508f" />
            <path d="M3 4h9q3 1 3 6l-1 5H9V8L8 15H4z" fill="#2ea3e8" />
            <path d="M0 2h6v2H0z" fill="#f0d55a" />
          </svg>
          <SwirlIcon className="size-4" />
          <svg viewBox="0 0 16 16" className="size-4">
            <path d="M8 .5l7 2q.5 9-7 13-7.500-4-7-13z" fill="#fff" />
            <path d="M8 2l5.500 1.600Q14 10 8 13.700 2 10 2.500 3.600z" fill="#2465ce" />
            <path d="M3.500 6L8 9.500 12.500 6" stroke="#fff" strokeWidth="2" fill="none" />
          </svg>
          <svg viewBox="0 0 16 16" className="size-4">
            <path d="M1.500 1v14" stroke="#fff" strokeWidth="1.500" />
            <path d="M3 2q3-1.500 5 0t6 1v6q-3 1-5-.5T3 8z" fill="#fff" stroke="#26382e" strokeWidth=".6" />
            <circle cx="11" cy="11" r="4.700" fill="#d92c26" />
            <path d="M9 9l4 4M13 9l-4 4" stroke="#fff" strokeWidth="1.500" />
          </svg>
          <svg viewBox="0 0 16 16" className="size-4">
            <path d="M5 4h10v8H5zM7 14.500h7M10.500 12v2" fill="#1e3f30" stroke="#fff" strokeWidth="1.300" />
            <path d="M1 1v3h4V1M3 4v10h3" fill="none" stroke="#fff" strokeWidth="1.300" />
          </svg>
          <svg viewBox="0 0 16 16" className="size-4">
            <path d="M1 5.500h2.500L7 2v12L3.500 10.500H1z" fill="#fff" />
            <path d="M9 6q1.500 2 0 4M11 4.500q3 3.500 0 7M13 3q4 5 0 10" stroke="#fff" fill="none" />
          </svg>
        </div>
        <div className="ml-2 flex w-[74px] flex-col items-center text-[12px] leading-[18px] tracking-[.22px] text-white">
          <span>0:11</span>
          <span>2018/4/11</span>
        </div>
        <div className="ml-0.5 h-[38px] w-[14px] border border-white/50 bg-linear-to-b from-white/40 to-white/10" />
      </div>
    </footer>
  )
}

function RenameDialog() {
  return (
    <div className="absolute top-[409px] left-[769px] flex h-[162px] w-[366px] flex-col rounded-[7px] border border-[#1e3535] bg-[linear-gradient(100deg,#b5eae6_0,#b0e8e4_22%,#86d6d4_44%,#90dad7_60%,#b0e8e4_78%,#b5ebe7_100%)] px-1.5 pb-1.5 shadow-[inset_0_0_0_1px_#d9fbf9,0_2px_10px_3px_rgba(0,0,0,.6)]">
      <div className="flex h-[28px] items-center pl-px text-black">重命名</div>
      <div className="flex flex-1 flex-col border border-[#4e8785] bg-white shadow-[0_0_0_1px_#c9f3f0]">
        <div className="flex h-[82px] border-b border-[#dfdfdf] pt-3 pl-2.5">
          <svg viewBox="0 0 32 29" className="mt-px h-[29px] w-8">
            <defs>
              <linearGradient id="warn" x1="0" x2="1" y1="0" y2="1">
                <stop offset="0" stopColor="#fff27a" />
                <stop offset=".5" stopColor="#fbd417" />
                <stop offset="1" stopColor="#e0900c" />
              </linearGradient>
            </defs>
            <path d="M16 1.500L31 27.500H1z" fill="url(#warn)" stroke="#a9a9a0" strokeWidth="1.800" strokeLinejoin="round" />
            <path d="M13.800 8.500h4.400l-1 11h-2.400z" fill="#222" />
            <circle cx="16" cy="23" r="2" fill="#222" />
          </svg>
          <div className="pt-px pl-2.5 text-black">
            <p className="leading-[22px]">如果改变文件扩展名，可能会导致文件不可用。</p>
            <p className="pt-3 leading-[22px]">确实要更改吗?</p>
          </div>
        </div>
        <div className="flex flex-1 items-center justify-end gap-2 bg-[#f0f0f0] pr-[11px] pb-px">
          <button className="h-[23px] w-[66px] rounded-[3px] border border-[#3c7fb1] bg-[linear-gradient(180deg,#e9f6fd_0,#d8effb_48%,#bee6fa_52%,#a7d9f3_100%)] p-px text-black">
            <span className="flex h-full items-center justify-center border border-dotted border-black">
              是(<u>Y</u>)
            </span>
          </button>
          <button className="h-[23px] w-[66px] rounded-[3px] border border-[#707070] bg-[linear-gradient(180deg,#f2f2f2_0,#ebebeb_48%,#dddddd_52%,#cfcfcf_100%)] text-black">
            否(<u>N</u>)
          </button>
        </div>
      </div>
    </div>
  )
}

function SpeedBall() {
  return (
    <div className="absolute top-[252px] left-[1735px] flex size-[58px] flex-col items-center overflow-hidden rounded-full border border-[#3f7fae] bg-linear-to-b from-[#e9f5fe] via-[#c9e4fb] to-[#d8edfd] shadow-[0_1px_4px_#8fb6d6]">
      <span className="flex h-[38px] items-end font-['Liberation_Sans'] text-[12px] tracking-[-.6px] text-[#0b1c3a]">581KB/s</span>
      <span className="flex w-full flex-1 justify-center bg-linear-to-b from-[#2568bd] to-[#3aa3ea]">
        <svg viewBox="0 0 10 10" className="mt-1 ml-1 size-2.5">
          <circle cx="2.500" cy="4" r="1.500" fill="none" stroke="#9fd0f5" />
          <circle cx="7.500" cy="7" r="1.500" fill="none" stroke="#9fd0f5" />
          <path d="M6 2L3.500 8" stroke="#9fd0f5" />
        </svg>
      </span>
    </div>
  )
}

export default function App() {
  return (
    <div className="relative flex h-[1080px] w-[1920px] flex-col overflow-hidden bg-[#fdfdfd] font-['Noto_Sans','Noto_Sans_CJK_SC',sans-serif] text-[12px] leading-4 whitespace-nowrap text-black">
      <TitleBar />
      <MenuBar />
      <Toolbar />
      <div className="flex min-h-0 flex-1">
        <NavTree />
        <ScrollBar />
        <FileList />
      </div>
      <DetailsPane />
      <Taskbar />
      <RenameDialog />
      <SpeedBall />
    </div>
  )
}
